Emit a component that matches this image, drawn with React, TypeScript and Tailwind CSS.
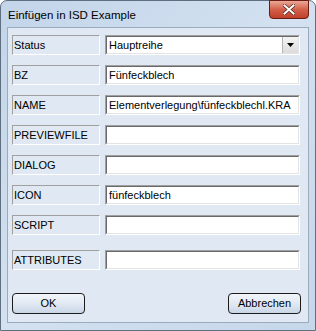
const rows: { label: string; value: string; combo?: boolean }[] = [
  { label: 'Status', value: 'Hauptreihe', combo: true },
  { label: 'BZ', value: 'Fünfeckblech' },
  { label: 'NAME', value: 'Elementverlegung\\fünfeckblechl.KRA' },
  { label: 'PREVIEWFILE', value: '' },
  { label: 'DIALOG', value: '' },
  { label: 'ICON', value: 'fünfeckblech' },
  { label: 'SCRIPT', value: '' },
];

function Field({ value, combo }: { value: string; combo?: boolean }) {
  return (
    <div className="w-[195px] h-[20px] border border-t-[#a0a0a0] border-l-[#a0a0a0] border-b-white border-r-white">
      <div className="h-full flex items-center border border-t-[#696969] border-l-[#696969] border-b-[#e3e3e3] border-r-[#e3e3e3] bg-white">
        <span className="flex-1 pl-[2px] whitespace-nowrap overflow-hidden">{value}</span>
        {combo && (
          <div className="w-[16px] h-full flex items-center justify-center bg-gradient-to-b from-[#f4f4f4] to-[#dcdcdc] border-l border-[#b4b4b4]">
            <svg width="7" height="4" viewBox="0 0 7 4">
              <path d="M0 0h7L3.5 4z" fill="#000" />
            </svg>
          </div>
        )}
      </div>
    </div>
  );
}

function Row({ label, value, combo }: { label: string; value: string; combo?: boolean }) {
  return (
    <div className="flex items-center gap-[5px]">
      <div className="w-[88px] h-[20px] flex items-center pl-[1px] border border-t-[#a0a0a0] border-l-[#a0a0a0] border-b-white border-r-white">
        {label}
      </div>
      <Field value={value} combo={combo} />
    </div>
  );
}

function DlgButton({ children }: { children: string }) {
  return (
    <button className="w-[73px] h-[21px] rounded-[4px] border border-[#1c1c1c] bg-gradient-to-b from-[#f2f5fa] via-[#e2e9f3] to-[#c9d5e6] text-black">
      {children}
    </button>
  );
}

export default function App() {
  return (
    <div
      className="w-[316px] h-[331px] flex flex-col rounded-t-[7px] border border-[#5f6f80] bg-gradient-to-br from-[#c3d5ea] via-[#d3e1f0] to-[#c6d7ea] text-[11px] text-black"
      style={{ fontFamily: '"Liberation Sans", Arial, sans-serif' }}
    >
      <div className="h-[26px] flex items-start pl-[7px] pr-[6px]">
        <span className="mt-[6px] flex-1 text-[11.5px]">Einfügen in ISD Example</span>
        <div className="w-[40px] h-[19px] -mt-px rounded-b-[4px] border border-[#6a1d14] bg-gradient-to-b from-[#e9a796] via-[#d2604a] to-[#c13f29] flex items-center justify-center">
          <svg width="12" height="11" viewBox="0 0 12 11">
            <path d="M1.5 1.5l9 8M10.5 1.5l-9 8" stroke="#5a2a22" strokeWidth="3.6" strokeLinecap="square" />
            <path d="M1.5 1.5l9 8M10.5 1.5l-9 8" stroke="#fff" strokeWidth="2" strokeLinecap="square" />
          </svg>
        </div>
      </div>
      <div className="flex-1 mx-[6px] mb-[7px] border border-[#9aabbd] bg-[#dfe8f3] flex flex-col pl-[4px] pt-[7px] pb-[8px]">
        <div className="flex flex-col gap-[10px]">
          {rows.map((r) => (
            <Row key={r.label} {...r} />
          ))}
        </div>
        <div className="mt-[15px]">
          <Row label="ATTRIBUTES" value="" />
        </div>
        <div className="mt-auto flex justify-between pr-[7px]">
          <DlgButton>OK</DlgButton>
          <DlgButton>Abbrechen</DlgButton>
        </div>
      </div>
    </div>
  );
}
